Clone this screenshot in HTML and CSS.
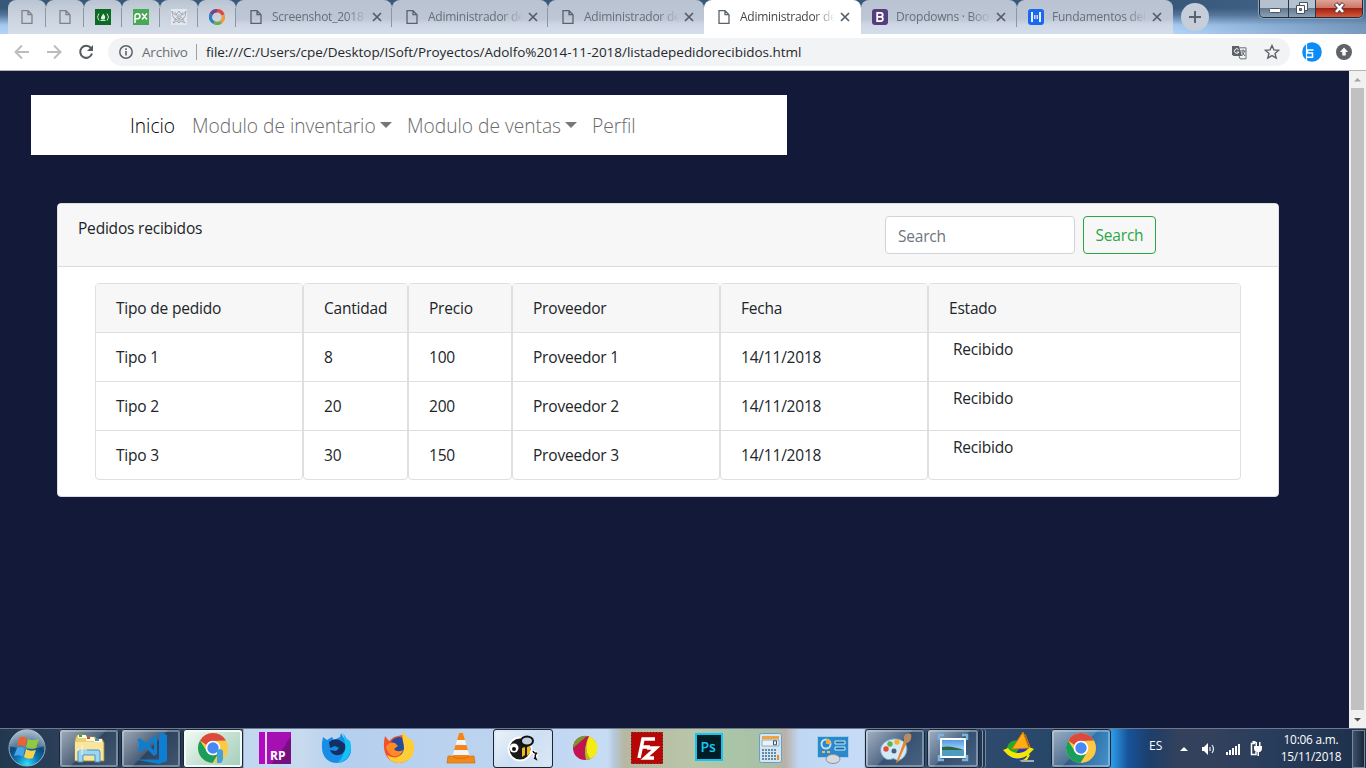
FILE: index.html
```html
<!DOCTYPE html>
<html lang="es">
<head>
<meta charset="utf-8">
<title>Adiministrador de pedidos</title>
<link rel="stylesheet" href="styles.css">
</head>
<body>
<svg class="defs" width="0" height="0">
  <symbol id="page" viewBox="0 0 12 16"><path d="M1 1.700h6l4 4v8.600H1zM7 1.700v4h4" fill="none" stroke="currentColor" stroke-width="1.300"/></symbol>
  <symbol id="x" viewBox="0 0 10 10"><path d="M1 1l8 8M9 1l-8 8" stroke="currentColor" stroke-width="1.700"/></symbol>
  <symbol id="chrome" viewBox="0 0 32 32">
    <circle cx="16" cy="16" r="15" fill="#fbc943"/>
    <path d="M3 8.500A15 15 0 0 1 29 8.500L16 9a7 7 0 0 0-6.500 4z" fill="#dc4a3d"/>
    <path d="M3 8.500A15 15 0 0 0 15.500 31l6.300-10.500A7 7 0 0 1 9.900 19.500z" fill="#199e5b"/>
    <circle cx="16" cy="16" r="7.300" fill="#fff"/><circle cx="16" cy="16" r="5.700" fill="#4788f4"/>
  </symbol>
</svg>
<header class="tabs">
  <div class="tab pin"><svg width="12" height="16"><use href="#page"/></svg></div>
  <div class="tab pin"><svg width="12" height="16"><use href="#page"/></svg></div>
  <div class="tab pin"><svg width="16" height="16"><path fill="#0d6a22" d="M0 0h16v16H0z"/><path d="M4 4.500q-3 3.500 0 7M12 4.500q3 3.500 0 7M5.500 11.500h5" stroke="#cfe5cf" fill="none"/><path d="M8 4.500c2 2 3 3.500 1.500 6h-3C5 8 7.500 7 8 4.500" fill="#dff0df"/></svg></div>
  <div class="tab pin"><svg width="16" height="16"><path fill="#48a854" d="M0 0h16v16H0z"/><path d="M2 14V7a2.500 2.500 0 1 1 2.500 2.700H2M9 4.500l5 6M14 4.500l-5 6" stroke="#fff" stroke-width="1.500" fill="none"/></svg></div>
  <div class="tab pin"><svg width="16" height="16"><path fill="#e4e8ee" d="M0 0h16v16H0z"/><path d="M1 2l3 4 2-1 2-3 2 3 2 1 3-4-1 6-3 2 3 4-4-2-2 2-2-2-4 2 3-4-3-2zM4 3l3 5M12 3L9 8M5 8l3 2 3-2M8 5v8M3 10l4 1M13 10l-4 1" stroke="#8d949f" stroke-width=".7" fill="none"/></svg></div>
  <div class="tab pin"><svg width="16" height="16" fill="none" stroke-width="3.400"><path d="M2 5.500A6.300 6.300 0 0 1 8 1.700" stroke="#6e4a8c"/><path d="M8 1.700A6.300 6.300 0 0 1 14 6" stroke="#dc4a43"/><path d="M14 6A6.300 6.300 0 0 1 12 13" stroke="#ee9b40"/><path d="M12 13A6.300 6.300 0 0 1 5 13.600" stroke="#6aae48"/><path d="M5 13.600A6.300 6.300 0 0 1 2 5.500" stroke="#2e7fc0"/></svg></div>
  <div class="tab"><svg class="fav" width="12" height="16"><use href="#page"/></svg><span class="tt">Screenshot_2018</span><svg class="cl" width="10" height="10"><use href="#x"/></svg></div>
  <div class="tab"><svg class="fav" width="12" height="16"><use href="#page"/></svg><span class="tt">Adiministrador de</span><svg class="cl" width="10" height="10"><use href="#x"/></svg></div>
  <div class="tab nosep"><svg class="fav" width="12" height="16"><use href="#page"/></svg><span class="tt">Adiministrador de</span><svg class="cl" width="10" height="10"><use href="#x"/></svg></div>
  <div class="tab active nosep"><svg class="fav" width="12" height="16"><use href="#page"/></svg><span class="tt">Adiministrador de</span><svg class="cl" width="10" height="10"><use href="#x"/></svg></div>
  <div class="tab"><svg class="sq" width="16" height="16"><rect width="16" height="16" rx="3" fill="#563d7c"/><path d="M5.200 3.800h3.500a2 2 0 0 1 0 4.100H5.200zM5.200 7.900h4a2.200 2.200 0 0 1 0 4.300h-4z" fill="none" stroke="#fff" stroke-width="1.800"/></svg><span class="tt">Dropdowns · Boo</span><svg class="cl" width="10" height="10"><use href="#x"/></svg></div>
  <div class="tab nosep"><svg class="sq" width="16" height="16"><rect width="16" height="16" rx="3" fill="#1868f2"/><path d="M4 3v10M12 3v10" stroke="#fff" stroke-width="1.800"/><path d="M6.800 6v4M9.200 6v4" stroke="#fff" stroke-width="1.200"/></svg><span class="tt">Fundamentos del</span><svg class="cl" width="10" height="10"><use href="#x"/></svg></div>
  <div class="plus"><svg width="12" height="12"><path d="M6 0v12M0 6h12" stroke="#5a626c" stroke-width="2"/></svg></div>
  <div class="win">
    <div class="wb"><svg width="28" height="17"><rect x="9.500" y="8.500" width="11" height="4" rx="1" fill="#fff" stroke="#4c5561"/></svg></div>
    <div class="wb mid"><svg width="26" height="17"><path d="M10.500 2.500h8v8h-8z" fill="#f5f7fa" stroke="#49515e"/><path d="M7.500 5.500h8v8h-8z" fill="#fff" stroke="#49515e"/><path d="M10.500 8.500h2v2h-2z" fill="#75869b" stroke="#49515e"/></svg></div>
    <div class="wb red"><svg width="46" height="17"><path d="M19.500 3.500l8 9M27.500 3.500l-8 9" stroke="#59434a" stroke-width="4.600"/><path d="M20 4l7 8M27 4l-7 8" stroke="#fff" stroke-width="2.600"/></svg></div>
  </div>
</header>
<div class="bar">
  <svg class="back" width="16" height="16"><path d="M15 8H2M8 1.500L1.500 8 8 14.500" fill="none" stroke="#babcbe" stroke-width="1.900"/></svg>
  <svg class="fwd" width="16" height="16"><path d="M1 8h13M8 1.500L14.500 8 8 14.500" fill="none" stroke="#babcbe" stroke-width="1.900"/></svg>
  <svg class="rel" width="16" height="16"><path d="M13 4.200A6 6 0 1 0 14 9.500" fill="none" stroke="#555a5f" stroke-width="2"/><path d="M15 1v6H9z" fill="#555a5f"/></svg>
  <div class="omni">
    <svg class="info" width="14" height="14"><circle cx="7" cy="7" r="6.200" fill="none" stroke="#5f6368" stroke-width="1.500"/><path d="M7 6v4.500M7 3.300v1.600" stroke="#5f6368" stroke-width="1.600"/></svg>
    <span class="arch">Archivo</span><i></i><span class="url">file:///C:/Users/cpe/Desktop/ISoft/Proyectos/Adolfo%2014-11-2018/listadepedidorecibidos.html</span>
    <svg class="trans" width="15" height="15"><path d="M0 1h7l3 10H1.500L0 9.500z" fill="#5f6368"/><path d="M7.500 2.800H14v11H8L7 11" fill="none" stroke="#6b6f74"/><path d="M8.500 6h5M11 4.500V6M12.500 6c-.6 2.500-2 4-3 5M9.800 7l3.200 4" stroke="#5f6368" fill="none"/><path d="M6.500 4.500a2.300 2.300 0 1 0 .4 2.500H4.800" fill="none" stroke="#fff"/></svg>
    <svg class="star" width="16" height="16"><path d="M8 1.500l1.900 4.400 4.800.4-3.700 3.100 1.200 4.700L8 11.600l-4.200 2.500L5 9.400 1.300 6.300l4.800-.4z" fill="none" stroke="#5f6368" stroke-width="1.400"/></svg>
  </div>
  <svg class="ext" width="20" height="20"><circle cx="10" cy="10" r="9.800" fill="#0b8cf9"/><path d="M4.500 1v18" stroke="#fff" stroke-width="1.200"/><path d="M11.500 8H5.500v3h5v4.200H4.500" fill="none" stroke="#fff" stroke-width="1.500"/></svg>
  <svg class="up" width="16" height="16"><circle cx="8" cy="8" r="8" fill="#5f6368"/><path d="M8 3.500L12 8H9.700v3.600H6.300V8H4z" fill="#fff"/></svg>
</div>
<div class="view">
  <main>
    <nav><a class="on">Inicio</a><a class="dd">Modulo de inventario</a><a class="dd v">Modulo de ventas</a><a>Perfil</a></nav>
    <section class="card">
      <div class="chead"><span class="ctitle">Pedidos recibidos</span><input placeholder="Search"><button>Search</button></div>
      <div class="cols">
        <div class="col"><b>Tipo de pedido</b><p>Tipo 1</p><p>Tipo 2</p><p>Tipo 3</p></div>
        <div class="col"><b>Cantidad</b><p>8</p><p>20</p><p>30</p></div>
        <div class="col"><b>Precio</b><p>100</p><p>200</p><p>150</p></div>
        <div class="col"><b>Proveedor</b><p>Proveedor 1</p><p>Proveedor 2</p><p>Proveedor 3</p></div>
        <div class="col"><b>Fecha</b><p>14/11/2018</p><p>14/11/2018</p><p>14/11/2018</p></div>
        <div class="col est"><b>Estado</b><p>Recibido</p><p>Recibido</p><p>Recibido</p></div>
      </div>
    </section>
  </main>
  <div class="scroll"><svg width="17" height="17"><path d="M5 10.500h7L8.500 7z" fill="#a3a3a3"/></svg><div class="thumb"></div><svg width="17" height="17"><path d="M5 7h7l-3.500 3.500z" fill="#505050"/></svg></div>
</div>
<footer class="task">
  <div class="orb"><svg width="40" height="40" viewBox="0 0 40 40"><defs><radialGradient id="og" cx=".5" cy=".95" r=".9"><stop offset="0" stop-color="#2fe0ff"/><stop offset=".35" stop-color="#0c78b4"/><stop offset=".65" stop-color="#114673"/><stop offset="1" stop-color="#7d9ab0"/></radialGradient></defs><circle cx="20" cy="20" r="18" fill="url(#og)" stroke="#8fb3c8"/><path d="M3 18a17 17 0 0 1 34 0c-9 4-24 4-34 0" fill="#fff" opacity=".28"/><path d="M12 10c3-2 5-1 8 0l-2 9c-3-2-5-2-8-1z" fill="#ee6230"/><path d="M21 11c4 2 6 1 11 0l-3 9c-3 1-6 1-10-1z" fill="#94c83d"/><path d="M10 20c3-1 5-1 8 1l-2 8c-3-2-5-2-9-1z" fill="#46a5e8"/><path d="M19 21c3 2 6 2 10 1l-3 8c-3 1-6 1-9-1z" fill="#fbd04a"/></svg></div>
  <div class="slot btn"><svg width="34" height="34" viewBox="0 0 34 34"><path d="M3 9l2-5h7l1 2h10l1 2h6l2 4v18H3z" fill="#e9cf73" stroke="#b99a3c" stroke-width=".7"/><path d="M6 4h8l1 3H6zM14 6h8v4h-8zM22 8h8v4h-8z" fill="#fffbe7"/><path d="M7 4h3v2H7z" fill="#25b525"/><path d="M15 6h3v2h-3z" fill="#d74529"/><path d="M23 8h4v2h-4z" fill="#3a91db"/><path d="M3 11h28v18H3z" fill="#f8e69e"/><path d="M6 31V21q0-2 2-2h18q2 0 2 2v10h-5v-7H11v7z" fill="#9bd5ef" stroke="#4695bf"/><path d="M10 14v10M5 19h10" stroke="#fff" opacity=".8"/></svg></div>
  <div class="slot btn"><svg width="32" height="32" viewBox="0 0 32 32"><path d="M24 0l8 3v26l-8 3L0 27.500h24zM2 8l3-2 6 5 8-7 3 2v16l-3 2-8-8-6 4-3-2 5-5zM19 9l-5 4.500 5 4.500zM4 10v6l3-3z" fill="#0e7fd0" fill-rule="evenodd"/></svg></div>
  <div class="slot btn lite"><svg width="32" height="32"><use href="#chrome"/><path d="M20 19q3-4 6 0v9l-2 3h-4z" fill="#43a2dd"/></svg></div>
  <div class="slot"><svg width="32" height="32"><path d="M0 0h32v32H0z" fill="#b20bbf"/><path d="M8 0h24v16z" fill="#880b98"/><path d="M8 0v32h4L32 4V0z" fill="#a60fb2"/><path d="M12 32L32 6v26z" fill="#77107f"/><path d="M7 0v32" stroke="#edd6f5" stroke-width="2"/><text x="11" y="28" class="rp">RP</text></svg></div>
  <div class="slot"><svg width="32" height="32"><path d="M2 5l4 3 5-3 2 3 6-3 1-4 4 7 4 1c6 13-2 22-12 22C5 31-2 22 2 5" fill="#178de8"/><path d="M22 1l4 6 3 2c4 12-4 21-13 22 9-7 9-19 6-30" fill="#15c2f4"/><path d="M8 10q6-5 12-1l4 3q2 9-6 11-7 1-9-5l6 1 3-3-4-2-5 2z" fill="#123064"/></svg></div>
  <div class="slot"><svg width="32" height="32"><path d="M2 4l4 5 5-4 8-2 7 5 4 2c2 13-5 21-14 21C5 31-2 21 2 4" fill="#f4512b"/><circle cx="16" cy="14" r="9" fill="#234a9c"/><path d="M3 15q3-6 9-4l3 3-4 3q3 4 9 1-2 7-10 6-5-2-7-9" fill="#ff8a26"/><path d="M20 0l5 6 5 3c4 14-3 21-14 22-6 0-10-3-12-8 8 5 16 2 17-7 0-6-3-9-1-16" fill="#ffce36"/></svg></div>
  <div class="slot"><svg width="32" height="32"><path d="M14 1h4l7 25H7z" fill="#f4f5f6"/><path d="M14 1h4l2 7h-8zM10.500 13h11l1.500 5H9zM8 23h16l2 4H6z" fill="#f58518"/><path d="M6 24l-3 0-1 7h28l-1-7h-3q-10 5-20 0" fill="#f28a18" stroke="#c26510" stroke-width=".6"/></svg></div>
  <div class="slot btn white"><svg width="34" height="32"><g stroke="#fff" stroke-width="2"><circle cx="14" cy="17" r="11.500" fill="#191919"/></g><ellipse cx="21" cy="9" rx="6" ry="4.500" fill="#bfd0df" stroke="#111" stroke-width="2"/><path d="M16 16v9l3-2v-8zM21 15v9l3-3v-7z" fill="#f2b51a"/><circle cx="8" cy="16" r="4.500" fill="#fff"/><circle cx="8" cy="17" r="2" fill="#111"/><path d="M27 19q1 3 4 2-3 2-1 6" stroke="#fff" stroke-width="4" fill="none"/><path d="M27 19q1 3 4 2-3 2-1 6l-2-1" stroke="#111" stroke-width="1.500" fill="none"/></svg></div>
  <div class="slot"><svg width="26" height="26"><circle cx="13" cy="13" r="12" fill="#c21550"/><path d="M1 13A12 12 0 0 1 15 1z" fill="#7b962f"/><path d="M3 20Q7 8 16 1l1 0Q12 8 10 24z" fill="#c21550"/><path d="M17 1.500a12 12 0 0 1 1 22.500c-5-7-5-15-1-22.500" fill="#f4ec13"/><path d="M17 2q-6 11 1 22l-4 1q-3-13 3-23" fill="#a6c626"/></svg></div>
  <div class="slot"><svg width="32" height="32"><path d="M.5.500h31v31H.5z" fill="#b80505" stroke="#830404" stroke-dasharray="2 1"/><path d="M8 26L12 7h12M10 15h9M16 16h9L14 26h9" fill="none" stroke="#fff" stroke-width="3.500"/></svg></div>
  <div class="slot"><svg class="ps" width="28" height="28"><path d="M1 1h26v26H1z" fill="#001d26" stroke="#12c5f7" stroke-width="2"/><text x="5.500" y="19" class="pst">Ps</text></svg></div>
  <div class="slot"><svg width="24" height="32"><rect x=".5" y="1.500" width="22" height="29" rx="2" fill="#d4e6f3" stroke="#6a9fc5"/><path d="M3 4h17v3H3z" fill="#f3a33b"/><path d="M3 8h17v6H3z" fill="#eaf3f8" stroke="#8eaabd"/><path d="M14.500 8.800h3v4h-3z" fill="none" stroke="#35516e"/><path d="M3 18h15M3 21h15M3 24h15M3 27h15" stroke="#6489a7" stroke-width="2" stroke-dasharray="2 1"/><path d="M18 23h2v5h-2z" fill="#ee8a24"/></svg></div>
  <div class="slot"><svg width="34" height="32"><rect x="1.500" y="4.500" width="31" height="21" rx="1" fill="#2b88ca" stroke="#a0cdec"/><circle cx="10" cy="12" r="4.500" fill="none" stroke="#bbe3f8" stroke-width="2"/><path d="M10 12V7a5 5 0 0 1 5 5z" fill="#f9a933"/><path d="M19 9h10v3H19zM19 15h10v3H19z" fill="#176ca8" stroke="#d1ecfa"/><path d="M6 20h3M11 20h3" stroke="#ffb650" stroke-width="2"/><ellipse cx="17" cy="27" rx="7" ry="4.500" fill="#d6dade" stroke="#89939c"/></svg></div>
  <div class="slot btn"><svg width="34" height="34"><path d="M3 22C0 12 13 5 23 9c9 4 7 16-1 20-4 2-4-2-8-1-5 2-9-1-11-6" fill="#d4e8f6" stroke="#6e9cbc"/><circle cx="8" cy="18" r="2.700" fill="#e34a3b"/><circle cx="12" cy="13" r="2.700" fill="#5fb545"/><circle cx="19" cy="11" r="2.700" fill="#f2b431"/><circle cx="16" cy="20" r="2.500" fill="#426280"/><path d="M18 32l8-22 3 1-9 20z" fill="#e9862c"/><path d="M26 10c-1-5 1-9 7-7 1 5-1 8-4 9z" fill="#b98b63"/></svg></div>
  <div class="slot btn stack"><svg width="32" height="32"><defs><linearGradient id="sky" x2="0" y2="1"><stop offset="0" stop-color="#4f9be6"/><stop offset="1" stop-color="#e6f4fc"/></linearGradient></defs><path d="M3 6h26v20H3z" fill="#fff"/><path d="M5 8h22v16H5z" fill="url(#sky)"/><path d="M5 15q8-2 22 3v2H5z" fill="#2d6543"/><path d="M5 18h22v6H5z" fill="#4c9cc2"/><path d="M2 8V3h5M25 3h5v5M30 23v5h-5M7 28H2v-5" fill="none" stroke="#78b4df" stroke-width="2.500"/></svg></div>
  <div class="slot"><svg width="34" height="32"><circle cx="15" cy="18" r="10" fill="#2435cf"/><path d="M5 19c-1-12 13-13 18-8-6 1-5 8-10 10z" fill="#28ac24"/><path d="M1 18l5-2q3 5 11 5 8-1 10-6l5 2-6 6q-11 7-20 0zM17 29q7-1 9-7l2 1-4 7z" fill="#f2e800"/><path d="M21 0l6 16-17 1zM23 2l5 13" fill="#ffac17" stroke="#d97b08"/><path d="M18 28h14v2H20z" fill="#a5abb3"/></svg></div>
  <div class="slot btn"><svg width="32" height="32"><use href="#chrome"/></svg></div>
  <div class="tray">
    <span class="es">ES</span>
    <svg class="t1" width="9" height="6"><path d="M0 5h8L4 1z" fill="#fff"/></svg>
    <svg class="t2" width="16" height="14"><path d="M1 5h2l4-4v12L3 9H1z" fill="#fff"/><path d="M9 5v4M11 3q3 4 0 8" fill="none" stroke="#e7edf3" stroke-width="1.200"/></svg>
    <svg class="t3" width="16" height="12"><path d="M2 9v3M5 7v5M8 5v7M11 3v9M14 1v11" stroke="#fff" stroke-width="2"/></svg>
    <svg class="t4" width="14" height="16"><path d="M6 2.500H2.500v11H7V11" fill="none" stroke="#fff" stroke-width="1.500"/><path d="M3.500 0h3v2h-3zM5 5h8v2q0 4-3 4H8Q5 11 5 7zM6.500 1H8v4H6.500zM10 1h1.500v4H10zM8.500 10H10v5H8.500z" fill="#fff"/></svg>
    <div class="clock"><span>10:06 a.m.</span><span>15/11/2018</span></div>
    <div class="desk"></div>
  </div>
</footer>
</body>
</html>
```
FILE: styles.css
```css
* { box-sizing: border-box; }
body { margin: 0; width: 1366px; height: 768px; overflow: hidden; display: flex; flex-direction: column; font-family: "Open Sans", "Noto Sans", sans-serif; }
svg { display: block; flex: none; }
.defs { position: absolute; }

.tabs { height: 34px; display: flex; padding-left: 8px; background: linear-gradient(90deg, rgba(90,125,160,0) 86%, rgba(80,115,150,.6)), linear-gradient(#38587a 0 8px, #55769a 15px, #a3c8ef 25px, #b3d4f8); }
.tab { width: 156px; height: 34px; flex: none; display: flex; align-items: center; padding-left: 14px; color: #66707c; background: linear-gradient(#b9c3d2, #bdc6d4 55%, #cfd7e5 72%, #d4deeb); border-radius: 8px 8px 0 0; position: relative; }
.tab:not(.nosep)::after { content: ""; position: absolute; right: 0; top: 8px; width: 1px; height: 19px; background: #8c97a4; }
.pin { width: 38px; padding: 0; justify-content: center; background: linear-gradient(#bac4d2, #c9d1dd 40%, #d4dde9); color: #7c838c; }
.fav { color: #5a626d; }
.tt { width: 98px; margin-left: 10px; white-space: nowrap; font-size: 12px; line-height: 18px; letter-spacing: -.25px; -webkit-mask-image: linear-gradient(90deg, #000 74px, transparent 95px); mask-image: linear-gradient(90deg, #000 74px, transparent 95px); }
.cl { margin-left: 2px; color: #535d68; }
.sq { margin-left: -3px; }
.sq + .tt { margin-left: 8px; }
.active { width: 157px; background: #fff; color: #43474c; }
.plus { width: 28px; height: 28px; margin: 3px 0 0 8px; border-radius: 50%; background: #c5ced9; display: flex; align-items: center; justify-content: center; }
.win { display: flex; margin-left: auto; margin-right: 3px; height: 18px; border: 1px solid #202c3b; border-top: 0; border-radius: 0 0 5px 5px; overflow: hidden; box-shadow: 0 0 0 1px #8da6bd; }
.wb { background: linear-gradient(#b4c1ce 0 45%, #65798f 50%, #8aa2b8); border-right: 1px solid #283648; width: 29px; }
.wb.mid { width: 27px; }
.wb.red { width: 46px; border: 0; background: linear-gradient(#dea397, #cc7768 45%, #a32011 50%, #d5593c); }

.bar { height: 37px; background: #fff; border-bottom: 1px solid #b4b4b6; display: flex; align-items: center; padding-left: 14px; flex: none; }
.fwd { margin-left: 16px; }
.rel { margin-left: 16px; }
.omni { margin-left: 14px; width: 1182px; height: 28px; border-radius: 14px; background: #f1f3f4; display: flex; align-items: center; padding-left: 11px; font-size: 13.500px; letter-spacing: -.03px; white-space: nowrap; }
.arch { margin-left: 9px; color: #6b6f73; width: 48px; letter-spacing: -.2px; }
.omni i { width: 1px; height: 16px; background: #9ca0a4; margin: 0 9px 0 6px; }
.url { color: #25282c; width: 1026px; }
.star { margin-left: 17px; }
.ext { margin-left: 12px; }
.up { margin-left: 14px; }

.view { height: 657px; display: flex; flex: none; background: #131939; }
main { width: 1349px; padding: 24px 0 0 31px; font-size: 15.500px; letter-spacing: -.2px; color: #212529; }
nav { width: 756px; height: 60px; background: #fff; display: flex; align-items: center; padding: 1px 0 0 99px; gap: 16px; font-size: 19.200px; font-weight: 300; letter-spacing: -.02px; color: #6a6a6a; white-space: nowrap; }
nav a { display: flex; align-items: center; width: 46px; }
nav .on { color: #000; }
nav .dd { width: 200px; margin-right: -1px; justify-content: space-between; }
nav .v { width: 170px; }
.dd::after { content: ""; border: 6px solid transparent; border-top-color: #777; border-bottom: 0; margin-top: -2px; }
.card { width: 1222px; height: 294px; margin: 48px 0 0 26px; border: 1px solid #dcdcdf; border-radius: 4px; background: #fff; overflow: hidden; }
.chead { height: 63px; background: #f7f7f7; border-bottom: 1px solid #dbdbdb; padding: 12px 0 0 20px; display: flex; }
.ctitle { width: 807px; line-height: 24px; }
input { width: 190px; height: 38px; border: 1px solid #ced4da; border-radius: 4px; padding: 2px 12px 0; font: inherit; letter-spacing: inherit; background: #fff; }
input::placeholder { color: #6c757d; opacity: 1; }
button { width: 73px; height: 38px; margin-left: 8px; padding: 0; border: 1px solid #28a745; border-radius: 4px; background: transparent; color: #28a745; font: inherit; letter-spacing: inherit; }
.cols { display: grid; grid-template-columns: 208px 105px 104px 208px 208px 313px; padding: 16px 0 0 37px; }
.col { border: 1px solid #dfdfdf; border-radius: 4px; overflow: hidden; height: 197px; }
.col b, .col p { display: block; margin: 0; height: 49px; padding: 12px 0 0 20px; line-height: 24px; font-weight: 400; border-bottom: 1px solid #dfdfdf; white-space: nowrap; }
.col b { background: #f7f7f7; }
.col p:last-child { border-bottom: 0; }
.est p { padding: 4px 0 0 24px; }
.scroll { width: 17px; background: #f1f1f1; display: flex; flex-direction: column; }
.thumb { height: 622px; margin: 0 2px 1px 2px; background: #c1c1c1; }

.task { height: 40px; display: flex; flex: none; border-top: 1px solid #6e7a8b; color: #fff; background: linear-gradient(90deg, #22384f 0, #2b4058 58px, #24344d 242px, #c1d7f0 244px, #c8daee 300px, #b5cfee 345px, #bdd4ef 500px, #c6dbf4 608px, #b6c8da 614px, #b6b8a2 624px, #b9c5a8 690px, #a9c5a8 730px, #a9bfa5 775px, #b9b0a6 785px, #bfd7f4 799px, #c7dcf6 864px, #364f6f 868px, #2d4a6d 1000px, #274769 1050px, #2c9ae6 1112px, #17539a 1128px, #1d3e6a 1150px, #34415c 1180px, #34415c 1210px, #283d5b 1270px, #1d2f4b 1366px); }
.orb { width: 59px; padding: 0 0 0 7px; }
.orb svg { margin-top: -1px; }
.slot { width: 62px; flex: none; display: flex; align-items: center; justify-content: center; padding: 0 2px 1px 0; }
.slot.btn { width: 60px; margin-right: 2px; padding: 0 0 1px; border: 1px solid #9ca9b8; outline: 1px solid #18263a; outline-offset: -1px; border-radius: 3px; background: linear-gradient(135deg, rgba(225,232,241,.65), rgba(132,151,174,.4) 48%, rgba(60,85,117,.35) 50%, rgba(117,141,168,.35)); box-shadow: inset 0 0 0 2px rgba(212,225,238,.4); }
.slot.lite { background: linear-gradient(135deg, #f5fbf8, #c6e2d4 50%, #a5cdb9); box-shadow: inset 0 0 0 2px #f2fcf5; }
.slot.white { background: linear-gradient(135deg, #edf4fb, #cddff3 50%, #dbe9f6); }
.slot.stack { width: 52px; margin-right: 10px; box-shadow: inset 0 0 0 2px rgba(212,225,238,.4), 3px 0 0 #1f3551, 4px 0 0 #8496ab, 6px 0 0 #1f3551, 7px 0 0 #72869d; }
.rp { font: 700 12px "Open Sans", sans-serif; fill: #fff; }
.pst { font: 600 14px "Open Sans", sans-serif; fill: #18c8f5; }
.ps { margin-top: -2px; }
.tray { display: flex; align-items: center; flex: 1; padding-left: 36px; }
.es { width: 31px; font-size: 12px; margin-top: -6px; }
.t2 { margin-left: 12px; }
.t3 { margin-left: 8px; }
.t4 { margin-left: 8px; }
.clock { display: flex; flex-direction: column; width: 70px; margin-left: 13px; align-items: center; font-size: 11.800px; letter-spacing: -.2px; line-height: 17px; margin-top: -1px; }
.desk { width: 13px; height: 38px; margin-left: auto; margin-right: 1px; border: 1px solid #77879b; background: linear-gradient(90deg, #405269, #17263b); }
```
